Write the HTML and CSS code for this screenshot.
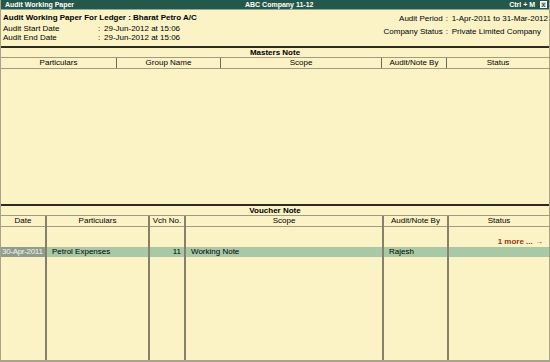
FILE: index.html
```html
<!DOCTYPE html>
<html lang="en">

<head>
    <meta charset="UTF-8">
    <title>Audit Working Paper</title>
    <link rel="stylesheet" href="styles.css">
</head>

<body>
    <div class="window">
        <!-- Title Bar -->
        <div class="titlebar">
            <span class="title-left">Audit Working Paper</span>
            <span class="title-center">ABC Company 11-12</span>
            <span class="title-right">Ctrl + M <span class="close-box">x</span></span>
        </div>

        <!-- Ledger Info -->
        <div class="info">
            <div class="info-left">
                <div class="ledger-title">Audit Working Paper For Ledger : Bharat Petro A/C</div>
                <div class="info-row"><span class="label">Audit Start Date</span><span class="colon">:</span><span>29-Jun-2012 at 15:06</span></div>
                <div class="info-row"><span class="label">Audit End Date</span><span class="colon">:</span><span>29-Jun-2012 at 15:06</span></div>
            </div>
            <div class="info-right">
                <span class="rlabel">Audit Period</span><span class="colon">:</span><span>1-Apr-2011 to 31-Mar-2012</span>
                <span class="rlabel">Company Status</span><span class="colon">:</span><span>Private Limited Company</span>
            </div>
        </div>

        <!-- Masters Note -->
        <div class="section masters">
            <div class="band">Masters Note</div>
            <div class="col-head masters-cols">
                <div>Particulars</div>
                <div>Group Name</div>
                <div>Scope</div>
                <div>Audit/Note By</div>
                <div>Status</div>
            </div>
            <div class="masters-body"></div>
        </div>

        <!-- Voucher Note -->
        <div class="section vouchers">
            <div class="band">Voucher Note</div>
            <table class="voucher-table">
                <colgroup>
                    <col class="c-date">
                    <col class="c-part">
                    <col class="c-vch">
                    <col class="c-scope">
                    <col class="c-by">
                    <col>
                </colgroup>
                <tr class="head-row">
                    <th>Date</th>
                    <th>Particulars</th>
                    <th>Vch No.</th>
                    <th>Scope</th>
                    <th>Audit/Note By</th>
                    <th>Status</th>
                </tr>
                <tr class="spacer-row">
                    <td></td><td></td><td></td><td></td><td></td><td></td>
                </tr>
                <tr class="more-row">
                    <td></td><td></td><td></td><td></td><td></td>
                    <td class="more">1 more ... &rarr;</td>
                </tr>
                <tr class="data-row selected">
                    <td class="date-cell">30-Apr-2011</td>
                    <td class="text-cell">Petrol Expenses</td>
                    <td class="num-cell">11</td>
                    <td class="text-cell">Working Note</td>
                    <td class="text-cell">Rajesh</td>
                    <td></td>
                </tr>
                <tr class="filler-row">
                    <td></td><td></td><td></td><td></td><td></td><td></td>
                </tr>
            </table>
        </div>
    </div>
</body>

</html>
```

FILE: styles.css
```css
html,
body {
    margin: 0;
    padding: 0;
}

body {
    font-family: "Liberation Sans", Arial, sans-serif;
    font-size: 8px;
    color: #000;
    background: #fbf3c6;
}

.window {
    width: 550px;
    height: 362px;
    display: flex;
    flex-direction: column;
    box-sizing: border-box;
    border-left: 1px solid #a8a48c;
    border-right: 1px solid #a8a48c;
    border-bottom: 2px solid #a8a48c;
    overflow: hidden;
}

/* Title Bar */
.titlebar {
    height: 9px;
    background: #24584a;
    color: #fff;
    font-weight: bold;
    font-size: 7px;
    line-height: 9px;
    display: flex;
    align-items: center;
    padding: 0 2px 0 4px;
    border-bottom: 1px solid #8fa89c;
    position: relative;
}

.title-left {
    flex: 1;
}

.title-center {
    position: absolute;
    left: 244px;
}

.title-right {
    display: flex;
    align-items: center;
    gap: 5px;
}

.close-box {
    display: inline-block;
    width: 7px;
    height: 7px;
    line-height: 6px;
    font-size: 7px;
    text-align: center;
    background: #d8d8d0;
    color: #24584a;
    border: 1px solid #fff;
    box-sizing: border-box;
}

/* Ledger Info */
.info {
    height: 34px;
    display: flex;
    justify-content: space-between;
    padding: 2px 1px 0 2px;
    border-bottom: 2px solid #2e2c22;
    line-height: 9px;
}

.ledger-title {
    font-weight: bold;
    font-size: 8px;
    line-height: 11px;
    margin-bottom: 1px;
}

.info-row {
    display: flex;
    white-space: nowrap;
}

.label {
    width: 95px;
}

.colon {
    width: 6px;
}

.info-right {
    display: grid;
    grid-template-columns: auto 6px auto;
    grid-template-rows: 11px 9px;
    row-gap: 3px;
    align-items: center;
    align-content: start;
    padding-top: 1px;
    white-space: nowrap;
}

.rlabel {
    text-align: right;
    padding-right: 3px;
}

/* Sections */
.band {
    height: 9px;
    line-height: 9px;
    text-align: center;
    font-weight: bold;
    border-bottom: 1px solid #a09c84;
}

.col-head {
    display: grid;
    height: 10px;
    line-height: 10px;
    border-bottom: 1px solid #a09c84;
}

.col-head > div {
    text-align: center;
    border-right: 1px solid #6e6a58;
}

.col-head > div:last-child {
    border-right: none;
}

.masters-cols {
    grid-template-columns: 116px 104px 161px 65px 1fr;
}

.masters {
    height: 156px;
    display: flex;
    flex-direction: column;
    border-bottom: 2px solid #2e2c22;
}

.masters-body {
    flex: 1;
}

.vouchers {
    flex: 1;
    display: flex;
    flex-direction: column;
}

/* Voucher Table */
.voucher-table {
    flex: 1;
    width: 100%;
    border-collapse: collapse;
    table-layout: fixed;
}

.c-date {
    width: 45px;
}

.c-part {
    width: 103px;
}

.c-vch {
    width: 36px;
}

.c-scope {
    width: 198px;
}

.c-by {
    width: 65px;
}

.voucher-table th,
.voucher-table td {
    padding: 0;
    border-right: 2px solid #85816c;
    white-space: nowrap;
    overflow: hidden;
}

.voucher-table th:last-child,
.voucher-table td:last-child {
    border-right: none;
}

.voucher-table th {
    font-weight: normal;
    height: 10px;
    line-height: 10px;
    text-align: center;
    border-bottom: 1px solid #a09c84;
}

.spacer-row td {
    height: 10px;
}

.more-row td {
    height: 10px;
    line-height: 10px;
}

.more {
    text-align: right;
    padding-right: 6px !important;
    color: #8c3b17;
    font-weight: bold;
}

.data-row td {
    height: 10px;
    line-height: 10px;
}

.selected {
    background: #a9c9a6;
}

.date-cell {
    background: #8f9e8c;
    color: #f4f4ee;
    padding-left: 1px !important;
    letter-spacing: -0.3px;
}

.text-cell {
    padding-left: 5px !important;
}

.num-cell {
    text-align: right;
    padding-right: 3px !important;
}

.filler-row td {
    height: auto;
}
```
